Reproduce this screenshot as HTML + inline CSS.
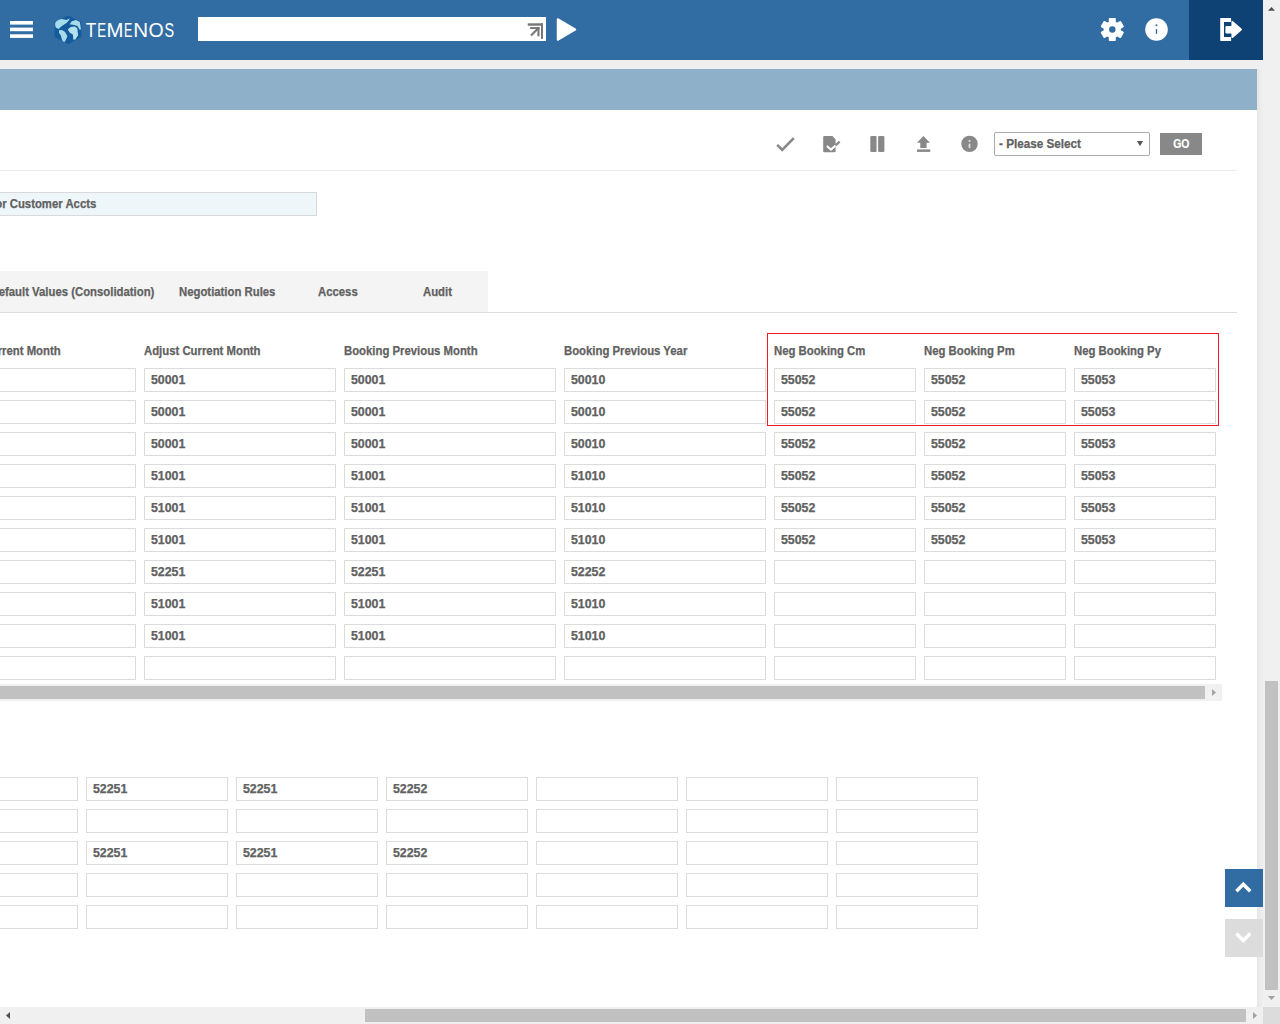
<!DOCTYPE html>
<html><head><meta charset="utf-8">
<style>
html,body{margin:0;padding:0;}
body{width:1280px;height:1024px;overflow:hidden;position:relative;background:#efefef;font-family:"Liberation Sans",sans-serif;}
.a{position:absolute;}
svg{position:absolute;overflow:visible;}
#hdr{left:0;top:0;width:1263px;height:60px;background:#316da3;}
#logout{left:1189px;top:0;width:74px;height:60px;background:#0e4174;}
#vs{left:1263px;top:0;width:17px;height:1007px;background:#f0f0f0;}
#hs{left:0;top:1007px;width:1263px;height:17px;background:#f0f0f0;}
#corner{left:1263px;top:1007px;width:17px;height:17px;background:#dcdcdc;}
#panel{left:0;top:69px;width:1257px;height:938px;background:#fff;border-bottom-right-radius:2px;}
#shadow{left:1257px;top:69px;width:6px;height:938px;background:linear-gradient(to right,#e6e6e6,#f0f0f0);}
#band{left:0;top:69px;width:1257px;height:41px;background:#8eb0c8;}
.sep{left:0;width:1237px;height:1px;background:#e6e6e6;}
.inp{position:absolute;box-sizing:border-box;height:24px;border:1px solid #dcdcdc;background:#fff;font-size:12px;font-weight:bold;color:#616161;-webkit-text-stroke:0.25px #616161;padding-left:6px;line-height:22px;white-space:nowrap;}
.lbl{position:absolute;font-size:12px;font-weight:bold;color:#616161;-webkit-text-stroke:0.25px #616161;white-space:nowrap;line-height:14px;}
.sx{display:inline-block;transform:scaleX(0.945);transform-origin:left center;}
.sx.r{transform-origin:right center;}
.dv{display:inline-block;transform:scaleX(1.03);transform-origin:left center;}
#search{left:198px;top:17px;width:348px;height:24px;background:#fff;}
#brand{left:86px;top:17px;font-size:20.3px;color:#fff;line-height:26px;white-space:nowrap;}
#brand span{display:inline-block;transform:scaleX(0.867);transform-origin:left center;}
#sel{left:994px;top:132px;width:156px;height:24px;box-sizing:border-box;border:1px solid #a9a9a9;border-radius:2px;background:#fff;}
#seltxt{left:999px;top:137px;font-size:12px;font-weight:bold;color:#616161;-webkit-text-stroke:0.25px #616161;line-height:14px;white-space:nowrap;}
#go{left:1160px;top:133px;width:42px;height:22px;background:#888;}
#gotxt{left:1160px;top:137px;width:42px;text-align:center;font-size:12px;font-weight:bold;color:#fff;-webkit-text-stroke:0.2px #fff;line-height:14px;}
#custinp{left:-1px;top:192px;width:318px;height:24px;box-sizing:border-box;border:1px solid #d9d9d9;background:#eef6fa;}
#custtxt{right:1184px;top:197px;font-size:12px;font-weight:bold;color:#616161;-webkit-text-stroke:0.25px #616161;line-height:14px;white-space:nowrap;}
#tabs{left:0;top:271px;width:488px;height:41px;background:#f4f4f4;}
.tab{position:absolute;top:285px;font-size:12px;font-weight:bold;color:#616161;-webkit-text-stroke:0.25px #616161;line-height:14px;white-space:nowrap;}
#redbox{left:767px;top:333px;width:452px;height:93px;box-sizing:border-box;border:1px solid #ed1c24;}
#ihs{left:0;top:684px;width:1222px;height:17px;background:#f1f1f1;}
#ithumb{left:0;top:686px;width:1205px;height:13px;background:#c1c1c1;}
#vthumb{left:1265px;top:681px;width:13px;height:309px;background:#c1c1c1;}
#hthumb{left:365px;top:1009px;width:881px;height:13px;background:#c1c1c1;}
#upbtn{left:1225px;top:869px;width:38px;height:38px;background:#316da3;}
#dnbtn{left:1225px;top:919px;width:38px;height:38px;background:#dcdcdc;}
</style></head><body>
<div id="hdr" class="a"></div>
<div id="logout" class="a"></div>
<div id="vs" class="a"></div>
<div id="hs" class="a"></div>
<div id="corner" class="a"></div>
<div id="vthumb" class="a"></div>
<div id="hthumb" class="a"></div>
<div id="panel" class="a"></div>
<div id="shadow" class="a"></div>
<div id="band" class="a"></div>

<div id="search" class="a"></div>
<!-- header items -->
<svg style="left:0;top:0" width="1280" height="60" viewBox="0 0 1280 60">
  <rect x="10" y="21" width="23" height="3.6" fill="#fff"/>
  <rect x="10" y="27.6" width="23" height="3.6" fill="#fff"/>
  <rect x="10" y="34.3" width="23" height="3.6" fill="#fff"/>
  <!-- globe -->
  <g transform="translate(50,12) scale(0.035162)">
    <path d="M520,120 L870,290 L880,690 L520,900 L145,700 L145,290 Z" fill="#145a9c" stroke="#145a9c" stroke-width="30" stroke-linejoin="round"/>
    <path d="M150,300 C200,240 280,200 340,200 L470,230 L560,175 L540,235 L470,310 L380,370 L300,430 L250,480 L170,450 L145,380 Z" fill="#a6dbe9"/>
    <path d="M560,345 L620,260 L740,225 L850,285 L880,480 L850,510 L780,400 L690,370 Z" fill="#a6dbe9"/>
    <path d="M255,520 L340,515 L430,570 L495,690 L440,820 L400,860 L345,800 L305,660 L258,600 Z" fill="#a6dbe9"/>
    <path d="M505,500 L590,425 L700,410 L775,460 L800,660 L720,780 L665,790 L650,640 L565,590 Z" fill="#b3e2ee"/>
  </g>
  <g fill="#fff" font-family="Liberation Sans"><text transform="translate(85.81,37.05) scale(0.825,1)" font-size="20.8">T</text><text transform="translate(97.31,37.05) scale(0.639,1)" font-size="20.8">E</text><text transform="translate(106.43,37.05) scale(0.977,1)" font-size="20.8">M</text><text transform="translate(123.97,37.05) scale(0.603,1)" font-size="20.8">E</text><text transform="translate(133.31,37.05) scale(0.990,1)" font-size="20.8">N</text><text transform="translate(148.48,37.05) scale(0.937,1)" font-size="20.8">O</text><text transform="translate(164.55,37.05) scale(0.693,1)" font-size="20.8">S</text></g>
  <!-- search arrow icon -->
  <g transform="translate(524,19)" fill="#777">
    <rect x="3.75" y="4.3" width="15.25" height="2.4"/>
    <rect x="17" y="4.3" width="2" height="15.6"/>
    <rect x="6.1" y="8.1" width="9.4" height="1.9"/>
    <rect x="13.4" y="8.1" width="2.1" height="9.2"/>
    <path d="M14.5,9 L7,16.5" stroke="#777" stroke-width="2.2"/>
  </g>
  <!-- play -->
  <path d="M558,19.5 L575,29.5 L558,39.5 Z" fill="#fff" stroke="#fff" stroke-width="2.5" stroke-linejoin="round"/>
  <!-- gear -->
  <g transform="translate(1112.3,29.5)" fill="#fff">
    <circle r="8.6"/>
    <rect x="-3.5" y="-11.6" width="7.0" height="11.6" rx="0.8" transform="rotate(0)"/><rect x="-3.5" y="-11.6" width="7.0" height="11.6" rx="0.8" transform="rotate(60)"/><rect x="-3.5" y="-11.6" width="7.0" height="11.6" rx="0.8" transform="rotate(120)"/><rect x="-3.5" y="-11.6" width="7.0" height="11.6" rx="0.8" transform="rotate(180)"/><rect x="-3.5" y="-11.6" width="7.0" height="11.6" rx="0.8" transform="rotate(240)"/><rect x="-3.5" y="-11.6" width="7.0" height="11.6" rx="0.8" transform="rotate(300)"/>
    <circle r="3.2" fill="#316da3"/>
  </g>
  <!-- info -->
  <circle cx="1156.5" cy="29.5" r="11.3" fill="#fff"/>
  <circle cx="1156.5" cy="25.2" r="1.05" fill="#316da3"/>
  <rect x="1155.8" y="28.9" width="1.4" height="5.1" rx="0.7" fill="#316da3"/>
  <!-- logout -->
  <g transform="translate(1210,10)" fill="#fff">
    <path d="M10.2,8.6 Q10.2,8 10.8,8 H21.1 V11.9 H14 V27 H21.1 V30.9 H10.8 Q10.2,30.9 10.2,30.3 Z"/>
    <path d="M15.4,17 Q15.4,16 16.4,16 H22.5 V23.4 H16.4 Q15.4,23.4 15.4,22.4 Z"/>
    <path d="M22.4,12 L31,19.5 L22.4,27 Z" stroke="#fff" stroke-width="2" stroke-linejoin="round"/>
  </g>
</svg>

<!-- toolbar -->
<svg style="left:0;top:0" width="1280" height="200" viewBox="0 0 1280 200">
  <polyline points="777.2,144.8 782.2,149.8 793.8,138.2" fill="none" stroke="#888" stroke-width="2.6"/>
  <path d="M823.2,137 Q823.2,136 824.2,136 H832.5 L835.6,139.4 V151.2 Q835.6,152.2 834.6,152.2 H824.2 Q823.2,152.2 823.2,151.2 Z" fill="#888"/>
  <polyline points="826.8,146 831,149.6 835.6,145.4" fill="none" stroke="#fff" stroke-width="2"/>
  <polyline points="835.6,145.4 839.6,141.6" fill="none" stroke="#888" stroke-width="2.2"/>
  <rect x="870.3" y="136" width="6.3" height="16" rx="1" fill="#888"/>
  <rect x="878.1" y="136" width="6.3" height="16" rx="1" fill="#888"/>
  <path d="M917,142.8 L923.4,136 L930,142.8 H926.6 V148.1 H920.3 V142.8 Z" fill="#888"/>
  <rect x="917" y="149.4" width="13.3" height="2.5" fill="#888"/>
  <circle cx="969.5" cy="143.9" r="8.2" fill="#888"/>
  <rect x="968.6" y="140" width="1.8" height="1.9" fill="#ddd"/>
  <rect x="968.6" y="143.7" width="1.8" height="4.4" fill="#ddd"/>
</svg>
<div id="sel" class="a"></div>
<div id="seltxt" class="a"><span class="sx" style="transform:scaleX(0.975)">- Please Select</span></div>
<svg style="left:0;top:0" width="1280" height="200"><path d="M1137,141 H1143 L1140,146.3 Z" fill="#555"/></svg>
<div id="go" class="a"></div>
<div id="gotxt" class="a"><span style="display:inline-block;transform:scaleX(0.87)">GO</span></div>
<div class="a sep" style="top:170px;background:#ececec"></div>

<div id="custinp" class="a"></div>
<div id="custtxt" class="a"><span class="sx r">Default Values for Customer Accts</span></div>

<div id="tabs" class="a"></div>
<div class="tab" style="right:1126px"><span class="sx r">Default Values (Consolidation)</span></div>
<div class="tab" style="left:179px"><span class="sx">Negotiation Rules</span></div>
<div class="tab" style="left:318px"><span class="sx">Access</span></div>
<div class="tab" style="left:423px"><span class="sx">Audit</span></div>
<div class="a sep" style="top:312px;background:#dedede"></div>

<div class="lbl" style="right:1219px;top:344px"><span class="sx r">Current Month</span></div>
<div class="lbl" style="left:144px;top:344px"><span class="sx">Adjust Current Month</span></div>
<div class="lbl" style="left:344px;top:344px"><span class="sx">Booking Previous Month</span></div>
<div class="lbl" style="left:564px;top:344px"><span class="sx">Booking Previous Year</span></div>
<div class="lbl" style="left:774px;top:344px"><span class="sx">Neg Booking Cm</span></div>
<div class="lbl" style="left:924px;top:344px"><span class="sx">Neg Booking Pm</span></div>
<div class="lbl" style="left:1074px;top:344px"><span class="sx">Neg Booking Py</span></div>
<div class="inp" style="left:-56px;top:368px;width:192px"></div>
<div class="inp" style="left:144px;top:368px;width:192px"><span class="dv">50001</span></div>
<div class="inp" style="left:344px;top:368px;width:212px"><span class="dv">50001</span></div>
<div class="inp" style="left:564px;top:368px;width:202px"><span class="dv">50010</span></div>
<div class="inp" style="left:774px;top:368px;width:142px"><span class="dv">55052</span></div>
<div class="inp" style="left:924px;top:368px;width:142px"><span class="dv">55052</span></div>
<div class="inp" style="left:1074px;top:368px;width:142px"><span class="dv">55053</span></div>
<div class="inp" style="left:-56px;top:400px;width:192px"></div>
<div class="inp" style="left:144px;top:400px;width:192px"><span class="dv">50001</span></div>
<div class="inp" style="left:344px;top:400px;width:212px"><span class="dv">50001</span></div>
<div class="inp" style="left:564px;top:400px;width:202px"><span class="dv">50010</span></div>
<div class="inp" style="left:774px;top:400px;width:142px"><span class="dv">55052</span></div>
<div class="inp" style="left:924px;top:400px;width:142px"><span class="dv">55052</span></div>
<div class="inp" style="left:1074px;top:400px;width:142px"><span class="dv">55053</span></div>
<div class="inp" style="left:-56px;top:432px;width:192px"></div>
<div class="inp" style="left:144px;top:432px;width:192px"><span class="dv">50001</span></div>
<div class="inp" style="left:344px;top:432px;width:212px"><span class="dv">50001</span></div>
<div class="inp" style="left:564px;top:432px;width:202px"><span class="dv">50010</span></div>
<div class="inp" style="left:774px;top:432px;width:142px"><span class="dv">55052</span></div>
<div class="inp" style="left:924px;top:432px;width:142px"><span class="dv">55052</span></div>
<div class="inp" style="left:1074px;top:432px;width:142px"><span class="dv">55053</span></div>
<div class="inp" style="left:-56px;top:464px;width:192px"></div>
<div class="inp" style="left:144px;top:464px;width:192px"><span class="dv">51001</span></div>
<div class="inp" style="left:344px;top:464px;width:212px"><span class="dv">51001</span></div>
<div class="inp" style="left:564px;top:464px;width:202px"><span class="dv">51010</span></div>
<div class="inp" style="left:774px;top:464px;width:142px"><span class="dv">55052</span></div>
<div class="inp" style="left:924px;top:464px;width:142px"><span class="dv">55052</span></div>
<div class="inp" style="left:1074px;top:464px;width:142px"><span class="dv">55053</span></div>
<div class="inp" style="left:-56px;top:496px;width:192px"></div>
<div class="inp" style="left:144px;top:496px;width:192px"><span class="dv">51001</span></div>
<div class="inp" style="left:344px;top:496px;width:212px"><span class="dv">51001</span></div>
<div class="inp" style="left:564px;top:496px;width:202px"><span class="dv">51010</span></div>
<div class="inp" style="left:774px;top:496px;width:142px"><span class="dv">55052</span></div>
<div class="inp" style="left:924px;top:496px;width:142px"><span class="dv">55052</span></div>
<div class="inp" style="left:1074px;top:496px;width:142px"><span class="dv">55053</span></div>
<div class="inp" style="left:-56px;top:528px;width:192px"></div>
<div class="inp" style="left:144px;top:528px;width:192px"><span class="dv">51001</span></div>
<div class="inp" style="left:344px;top:528px;width:212px"><span class="dv">51001</span></div>
<div class="inp" style="left:564px;top:528px;width:202px"><span class="dv">51010</span></div>
<div class="inp" style="left:774px;top:528px;width:142px"><span class="dv">55052</span></div>
<div class="inp" style="left:924px;top:528px;width:142px"><span class="dv">55052</span></div>
<div class="inp" style="left:1074px;top:528px;width:142px"><span class="dv">55053</span></div>
<div class="inp" style="left:-56px;top:560px;width:192px"></div>
<div class="inp" style="left:144px;top:560px;width:192px"><span class="dv">52251</span></div>
<div class="inp" style="left:344px;top:560px;width:212px"><span class="dv">52251</span></div>
<div class="inp" style="left:564px;top:560px;width:202px"><span class="dv">52252</span></div>
<div class="inp" style="left:774px;top:560px;width:142px"></div>
<div class="inp" style="left:924px;top:560px;width:142px"></div>
<div class="inp" style="left:1074px;top:560px;width:142px"></div>
<div class="inp" style="left:-56px;top:592px;width:192px"></div>
<div class="inp" style="left:144px;top:592px;width:192px"><span class="dv">51001</span></div>
<div class="inp" style="left:344px;top:592px;width:212px"><span class="dv">51001</span></div>
<div class="inp" style="left:564px;top:592px;width:202px"><span class="dv">51010</span></div>
<div class="inp" style="left:774px;top:592px;width:142px"></div>
<div class="inp" style="left:924px;top:592px;width:142px"></div>
<div class="inp" style="left:1074px;top:592px;width:142px"></div>
<div class="inp" style="left:-56px;top:624px;width:192px"></div>
<div class="inp" style="left:144px;top:624px;width:192px"><span class="dv">51001</span></div>
<div class="inp" style="left:344px;top:624px;width:212px"><span class="dv">51001</span></div>
<div class="inp" style="left:564px;top:624px;width:202px"><span class="dv">51010</span></div>
<div class="inp" style="left:774px;top:624px;width:142px"></div>
<div class="inp" style="left:924px;top:624px;width:142px"></div>
<div class="inp" style="left:1074px;top:624px;width:142px"></div>
<div class="inp" style="left:-56px;top:656px;width:192px"></div>
<div class="inp" style="left:144px;top:656px;width:192px"></div>
<div class="inp" style="left:344px;top:656px;width:212px"></div>
<div class="inp" style="left:564px;top:656px;width:202px"></div>
<div class="inp" style="left:774px;top:656px;width:142px"></div>
<div class="inp" style="left:924px;top:656px;width:142px"></div>
<div class="inp" style="left:1074px;top:656px;width:142px"></div>
<div class="inp" style="left:-64px;top:777px;width:142px"></div>
<div class="inp" style="left:86px;top:777px;width:142px"><span class="dv">52251</span></div>
<div class="inp" style="left:236px;top:777px;width:142px"><span class="dv">52251</span></div>
<div class="inp" style="left:386px;top:777px;width:142px"><span class="dv">52252</span></div>
<div class="inp" style="left:536px;top:777px;width:142px"></div>
<div class="inp" style="left:686px;top:777px;width:142px"></div>
<div class="inp" style="left:836px;top:777px;width:142px"></div>
<div class="inp" style="left:-64px;top:809px;width:142px"></div>
<div class="inp" style="left:86px;top:809px;width:142px"></div>
<div class="inp" style="left:236px;top:809px;width:142px"></div>
<div class="inp" style="left:386px;top:809px;width:142px"></div>
<div class="inp" style="left:536px;top:809px;width:142px"></div>
<div class="inp" style="left:686px;top:809px;width:142px"></div>
<div class="inp" style="left:836px;top:809px;width:142px"></div>
<div class="inp" style="left:-64px;top:841px;width:142px"></div>
<div class="inp" style="left:86px;top:841px;width:142px"><span class="dv">52251</span></div>
<div class="inp" style="left:236px;top:841px;width:142px"><span class="dv">52251</span></div>
<div class="inp" style="left:386px;top:841px;width:142px"><span class="dv">52252</span></div>
<div class="inp" style="left:536px;top:841px;width:142px"></div>
<div class="inp" style="left:686px;top:841px;width:142px"></div>
<div class="inp" style="left:836px;top:841px;width:142px"></div>
<div class="inp" style="left:-64px;top:873px;width:142px"></div>
<div class="inp" style="left:86px;top:873px;width:142px"></div>
<div class="inp" style="left:236px;top:873px;width:142px"></div>
<div class="inp" style="left:386px;top:873px;width:142px"></div>
<div class="inp" style="left:536px;top:873px;width:142px"></div>
<div class="inp" style="left:686px;top:873px;width:142px"></div>
<div class="inp" style="left:836px;top:873px;width:142px"></div>
<div class="inp" style="left:-64px;top:905px;width:142px"></div>
<div class="inp" style="left:86px;top:905px;width:142px"></div>
<div class="inp" style="left:236px;top:905px;width:142px"></div>
<div class="inp" style="left:386px;top:905px;width:142px"></div>
<div class="inp" style="left:536px;top:905px;width:142px"></div>
<div class="inp" style="left:686px;top:905px;width:142px"></div>
<div class="inp" style="left:836px;top:905px;width:142px"></div>

<div id="redbox" class="a"></div>
<div id="ihs" class="a"></div>
<div id="ithumb" class="a"></div>
<svg style="left:0;top:0" width="1280" height="1024">
  <path d="M1212,689 L1216,692.5 L1212,696 Z" fill="#a3a3a3"/>
  <path d="M1268,10.7 L1271.5,7.1 L1275,10.7 Z" fill="#505050"/>
  <path d="M1267.8,996.1 L1275.1,996.1 L1271.5,1000 Z" fill="#a3a3a3"/>
  <path d="M10,1012 L6,1015.5 L10,1019 Z" fill="#505050"/>
  <path d="M1253,1012 L1257,1015.5 L1253,1019 Z" fill="#a3a3a3"/>
</svg>
<div id="upbtn" class="a"></div>
<div id="dnbtn" class="a"></div>
<svg style="left:0;top:0" width="1280" height="1024">
  <polyline points="1236.4,891.2 1243.3,884.3 1250.2,891.2" fill="none" stroke="#fff" stroke-width="3.5"/>
  <polyline points="1236.4,933.6 1243.3,940.5 1250.2,933.6" fill="none" stroke="#fff" stroke-width="3.5"/>
</svg>
</body></html>
